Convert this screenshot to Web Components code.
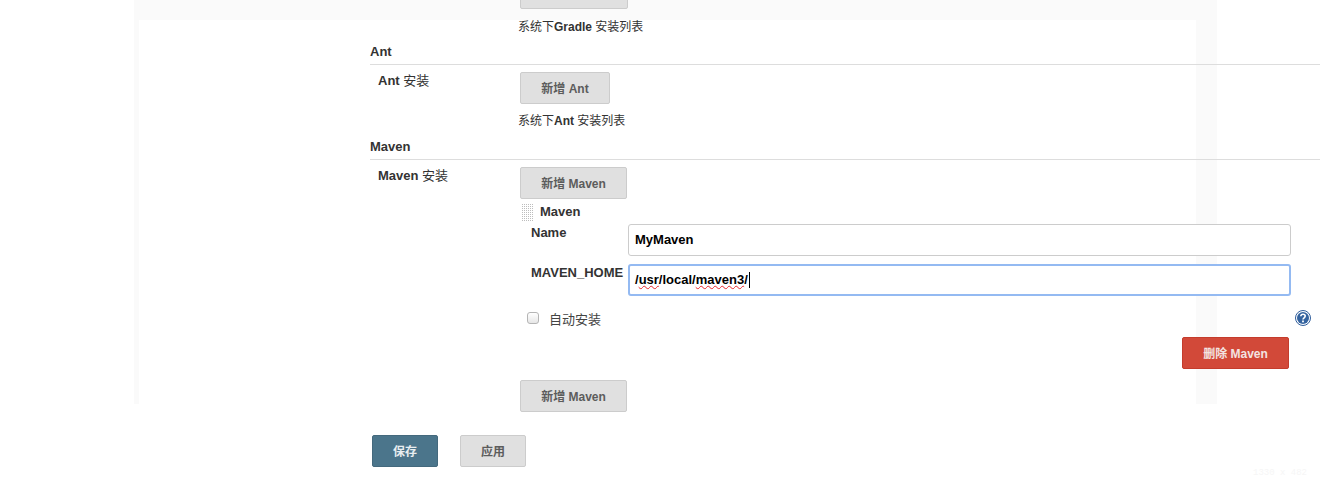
<!DOCTYPE html>
<html>
<head>
<meta charset="utf-8">
<style>
  html, body { margin: 0; background: #fff; }
  body { font-family: "Liberation Sans", "Noto Sans CJK SC", sans-serif; font-size: 13px; color: #333; }
</style>
</head>
<body>
<config-page>
  <tool-help style="margin-left: 148px">系统下<b>Gradle</b> 安装列表</tool-help>

  <section-head style="margin-top: 9px">Ant</section-head>
  <tool-row label="Ant" label-suffix=" 安装">
    <flat-button style="width: 90px">新增 Ant</flat-button>
    <tool-help style="margin-top: 10px">系统下<b>Ant</b> 安装列表</tool-help>
  </tool-row>

  <section-head style="margin-top: 10px">Maven</section-head>
  <tool-row label="Maven" label-suffix=" 安装">
    <flat-button style="width: 107px">新增 Maven</flat-button>
    <maven-block style="margin-top: 4px"></maven-block>
    <flat-button style="width: 107px; margin-top: 11px">新增 Maven</flat-button>
  </tool-row>

  <form-actions></form-actions>
</config-page>

<script>
class ConfigPage extends HTMLElement {
  connectedCallback() {
    this.attachShadow({ mode: 'open' });
    this.shadowRoot.innerHTML = `
      <style>
        :host { display: grid; width: 1330px; height: 482px; overflow: hidden; position: relative; }
        .panel, .content { grid-area: 1 / 1; }
        .panel {
          width: 1083px;
          height: 404px;
          margin-left: 134px;
          background: #fafafa;
          display: flex;
          box-sizing: border-box;
          padding: 20px 21px 0 5px;
        }
        .panel div { flex: 1; background: #fff; }
        .content { padding: 20px 10px 0 370px; z-index: 1; }
        .stub {
          position: absolute;
          left: 520px;
          top: -10px;
          width: 108px;
          height: 19px;
          box-sizing: border-box;
          background: #e0e0e0;
          border: 1px solid #ccc;
          border-radius: 2px;
        }
        .size {
          position: absolute;
          left: 1253px;
          top: 468px;
          font: 9px "Liberation Mono", monospace;
          color: #f6f6f6;
        }
      </style>
      <div class="panel"><div></div></div>
      <div class="stub"></div>
      <div class="content"><slot></slot></div>
      <div class="size">1330 x 482</div>
    `;
  }
}
customElements.define('config-page', ConfigPage);

class SectionHead extends HTMLElement {
  connectedCallback() {
    this.attachShadow({ mode: 'open' });
    this.shadowRoot.innerHTML = `
      <style>
        :host {
          display: block;
          font-weight: bold;
          font-size: 13px;
          line-height: 15px;
          padding-bottom: 5px;
          border-bottom: 1px solid #ddd;
          color: #333;
        }
      </style>
      <slot></slot>
    `;
  }
}
customElements.define('section-head', SectionHead);

class ToolRow extends HTMLElement {
  connectedCallback() {
    this.attachShadow({ mode: 'open' });
    this.shadowRoot.innerHTML = `
      <style>
        :host { display: grid; grid-template-columns: 150px 1fr; padding-top: 7px; }
        .label { padding: 1px 0 0 8px; line-height: 15px; color: #333; }
        b { font-weight: bold; }
        .body { min-width: 0; }
      </style>
      <div class="label"><b>${this.getAttribute('label')}</b>${this.getAttribute('label-suffix')}</div>
      <div class="body"><slot></slot></div>
    `;
  }
}
customElements.define('tool-row', ToolRow);

class FlatButton extends HTMLElement {
  connectedCallback() {
    this.attachShadow({ mode: 'open' });
    this.shadowRoot.innerHTML = `
      <style>
        :host {
          display: flex;
          align-items: center;
          justify-content: center;
          box-sizing: border-box;
          height: 32px;
          padding-bottom: 2px;
          background: #e0e0e0;
          border: 1px solid #ccc;
          border-radius: 2px;
          color: #5c5c5c;
          font-size: 12px;
          font-weight: bold;
        }
        :host([kind="danger"]) { background: #d24939; border-color: #c43c2c; color: #f3e4e1; }
        :host([kind="primary"]) { background: #4b758b; border-color: #44697d; color: #e8eef1; }
      </style>
      <slot></slot>
    `;
  }
}
customElements.define('flat-button', FlatButton);

class ToolHelp extends HTMLElement {
  connectedCallback() {
    this.attachShadow({ mode: 'open' });
    this.shadowRoot.innerHTML = `
      <style>
        :host {
          display: block;
          margin-left: -2px;
          font-size: 12px;
          line-height: 15px;
          color: #333;
        }
      </style>
      <slot></slot>
    `;
  }
}
customElements.define('tool-help', ToolHelp);

class TextField extends HTMLElement {
  connectedCallback() {
    this.attachShadow({ mode: 'open' });
    this.shadowRoot.innerHTML = `
      <style>
        :host {
          display: flex;
          align-items: center;
          box-sizing: border-box;
          height: 32px;
          padding: 0 6px;
          background: #fff;
          border: 1px solid #ccc;
          border-radius: 3px;
          color: #000;
          font-size: 13px;
          font-weight: bold;
        }
        :host([focused]) {
          border: 2px solid #94baf2;
          padding: 0 5px;
        }
        .text { margin-bottom: 2px; }
        ::slotted(u) { text-decoration: underline wavy #e8262b; text-decoration-thickness: 1px; text-underline-offset: 1px; }
        .caret { display: none; width: 1px; height: 16px; background: #000; margin-left: 1px; }
        :host([focused]) .caret { display: block; }
      </style>
      <span class="text"><slot></slot></span><span class="caret"></span>
    `;
  }
}
customElements.define('text-field', TextField);

class DragHandle extends HTMLElement {
  connectedCallback() {
    this.attachShadow({ mode: 'open' });
    this.shadowRoot.innerHTML = `
      <style>
        :host {
          display: block;
          width: 12px;
          height: 17px;
          margin-top: 1px;
          background: repeating-conic-gradient(#bdbdbd 0 25%, transparent 0 100%) 0 0 / 2px 2px;
        }
      </style>
    `;
  }
}
customElements.define('drag-handle', DragHandle);

class MavenBlock extends HTMLElement {
  connectedCallback() {
    this.attachShadow({ mode: 'open' });
    this.shadowRoot.innerHTML = `
      <style>
        :host { display: block; }
        .head { display: flex; align-items: flex-start; gap: 7px; padding-left: 1px; height: 22px; }
        .head b { line-height: 15px; margin-top: 1px; color: #333; }
        .grid {
          display: grid;
          grid-template-columns: 97px 663px;
          row-gap: 8px;
          padding-left: 11px;
          margin-top: -1px;
        }
        .grid b { line-height: 15px; margin-top: 1px; color: #333; white-space: nowrap; }
        .auto {
          display: flex;
          align-items: center;
          margin-top: 14px;
          padding-left: 7px;
          height: 16px;
          position: relative;
        }
        .box {
          width: 12px;
          height: 12px;
          box-sizing: border-box;
          border: 1px solid #b5b5b5;
          border-radius: 3px;
          background: linear-gradient(#fff, #e6e6e6);
          margin: -1px 10px 0 0;
        }
        .auto span { color: #444; font-size: 13px; }
        svg { position: absolute; left: 775px; top: 0; }
        .del { display: flex; justify-content: flex-end; margin-top: 11px; padding-right: 31px; }
      </style>
      <div class="head"><drag-handle></drag-handle><b>Maven</b></div>
      <div class="grid">
        <b>Name</b><text-field>MyMaven</text-field>
        <b>MAVEN_HOME</b><text-field focused>/<u>usr</u>/local/<u>maven3</u>/</text-field>
      </div>
      <div class="auto">
        <div class="box"></div><span>自动安装</span>
        <svg width="16" height="16" viewBox="0 0 16 16">
          <circle cx="8" cy="8" r="7.5" fill="#fff" stroke="#2f5d9b"/>
          <circle cx="8" cy="8" r="6" fill="#34639f"/>
          <path d="M5.8 6.2C5.9 4.9 6.8 4.2 8 4.2c1.3 0 2.2.8 2.2 1.9 0 1.7-2.2 1.7-2.2 3.5" fill="none" stroke="#fff" stroke-width="1.6"/>
          <rect x="7.1" y="10.5" width="1.8" height="1.8" fill="#fff"/>
        </svg>
      </div>
      <div class="del"><flat-button kind="danger" style="width: 107px">删除 Maven</flat-button></div>
    `;
  }
}
customElements.define('maven-block', MavenBlock);

class FormActions extends HTMLElement {
  connectedCallback() {
    this.attachShadow({ mode: 'open' });
    this.shadowRoot.innerHTML = `
      <style>
        :host { display: flex; gap: 22px; padding: 23px 0 0 2px; }
      </style>
      <flat-button kind="primary" style="width: 66px">保存</flat-button>
      <flat-button style="width: 66px">应用</flat-button>
    `;
  }
}
customElements.define('form-actions', FormActions);
</script>
</body>
</html>
